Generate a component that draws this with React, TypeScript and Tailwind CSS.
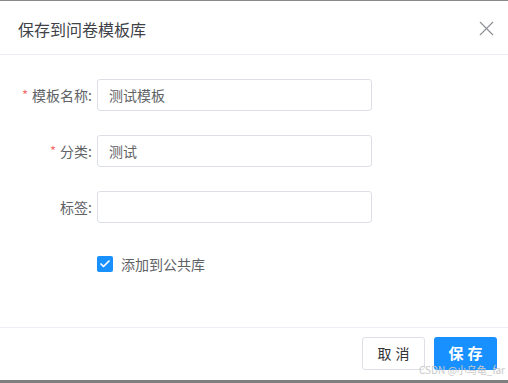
import { X, Check } from "lucide-react";

const font = { fontFamily: '"Noto Sans CJK SC", "Noto Sans", sans-serif' };

function Field({ label, required, value }: { label: string; required?: boolean; value: string }) {
  return (
    <div className="flex items-center h-[32px]">
      <div className="w-[92px] flex justify-end items-center text-[14px] text-[#606266]">
        {required && <span className="text-[#f56c6c] mr-[4px] text-[13px]">*</span>}
        <span>{label}:</span>
      </div>
      <div className="ml-[5px] w-[275px] h-[32px] border border-[#dcdfe6] rounded-[3px] flex items-center px-[11px] text-[14px] text-[#606266]">
        {value}
      </div>
    </div>
  );
}

export default function App() {
  return (
    <div className="relative w-[508px] h-[383px] bg-white flex flex-col border-t border-[#8a8a8a]" style={font}>
      {/* Header */}
      <div className="h-[54px] flex items-center justify-between pl-[18px] pr-[9px] border-b border-[#ebeef5]">
        <span className="text-[16px] text-[#404247] mt-[2px]">保存到问卷模板库</span>
        <X size={25} strokeWidth={1.1} className="text-[#8c8f95] mt-[1px]" />
      </div>

      {/* Body */}
      <div className="flex-1 flex flex-col pt-[24px] gap-[24px]">
        <Field label="模板名称" required value="测试模板" />
        <Field label="分类" required value="测试" />
        <Field label="标签" value="" />
        <div className="flex items-center h-[32px] pl-[97px] mt-[1px]">
          <div className="w-[16px] h-[16px] rounded-[2px] bg-[#1890ff] flex items-center justify-center">
            <Check size={12} strokeWidth={3.5} className="text-white" />
          </div>
          <span className="ml-[8px] text-[14px] text-[#606266]">添加到公共库</span>
        </div>
      </div>

      {/* Footer */}
      <div className="h-[53px] border-t border-[#ebeef5] flex items-start justify-end gap-[9px] pt-[9px] pr-[11px]">
        <button className="w-[63px] h-[33px] border border-[#dcdfe6] rounded-[3px] bg-white text-[14px] text-[#303133] tracking-[4px] pl-[4px]">
          取消
        </button>
        <button className="w-[63px] h-[33px] rounded-[3px] bg-[#1890ff] text-[15px] font-bold text-white tracking-[4px] pl-[4px]">
          保存
        </button>
      </div>

      {/* Bottom bar */}
      <div className="h-[3px] bg-[#7f7f7f]" />

      {/* Watermark */}
      <span className="absolute right-[3px] bottom-[6px] text-[10px] text-[#c8c8c8]">CSDN @小乌龟_far</span>
    </div>
  );
}
